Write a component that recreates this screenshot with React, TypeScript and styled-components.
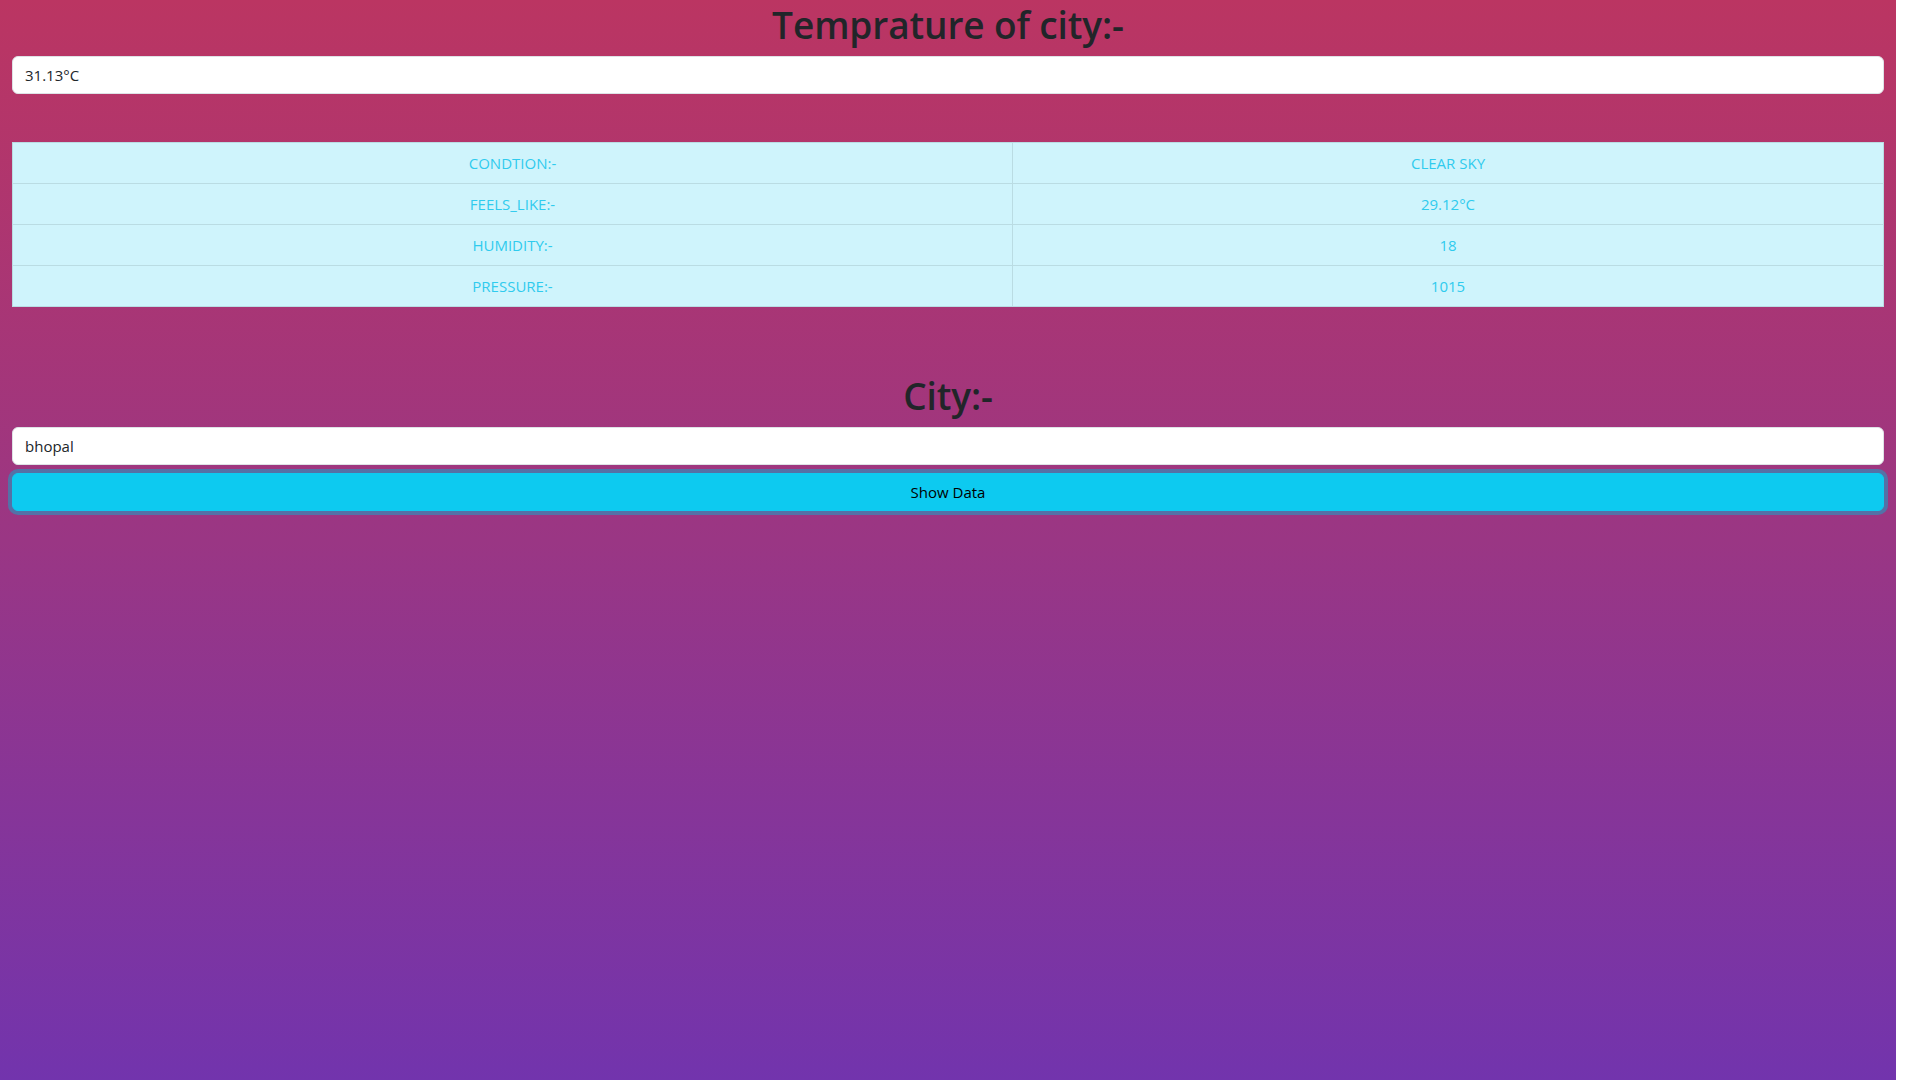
import React from "react";
import styled, { createGlobalStyle } from "styled-components";

const Global = createGlobalStyle`
  html, body { margin: 0; padding: 0; background: #ffffff; }
  body {
    font-family: "Open Sans", "Noto Sans", "Liberation Sans", sans-serif;
    font-size: 16px;
    line-height: 1.5;
    color: #212529;
  }
  * { box-sizing: border-box; }
`;

const Page = styled.div`
  width: calc(100% - 24px);
  min-height: 1080px;
  background: linear-gradient(to bottom, #bb3562 0%, #9a3684 50%, #7234ad 100%);
  padding: 0 12px;
`;

const Heading = styled.h1<{ $top?: number }>`
  margin: ${(p) => p.$top ?? 0}px 0 8px;
  padding-top: 1px;
  height: 48px;
  font-family: "Open Sans", "Noto Sans", sans-serif;
  font-size: 37px;
  font-weight: 600;
  line-height: 48px;
  text-align: center;
  color: #212529;
  letter-spacing: -0.1px;
`;

const Field = styled.input`
  display: block;
  width: 100%;
  height: 38px;
  padding: 6px 12px;
  font-family: "Open Sans", "Noto Sans", sans-serif;
  font-size: 15px;
  line-height: 24px;
  color: #212529;
  background: #ffffff;
  border: 1px solid #dee2e6;
  border-radius: 6px;
  outline: none;
`;

const Table = styled.table`
  width: 100%;
  margin-top: 48px;
  border-collapse: collapse;
  background: #cff4fc;
  border: 1px solid #badce3;
  font-family: "Open Sans", "Noto Sans", sans-serif;
  font-size: 15px;
`;

const Cell = styled.td<{ $wide?: boolean }>`
  width: ${(p) => (p.$wide ? "1000px" : "auto")};
  height: 41px;
  padding: 8px;
  text-align: center;
  color: #2fcbee;
  border: 1px solid #badce3;
  line-height: 24px;
`;

const ShowButton = styled.button`
  display: block;
  width: 100%;
  height: 38px;
  margin-top: 8px;
  padding: 6px 12px;
  font-family: "Open Sans", "Noto Sans", sans-serif;
  font-size: 15px;
  line-height: 24px;
  color: #000000;
  background: #0dcaf0;
  border: 1px solid #0dcaf0;
  border-radius: 6px;
  box-shadow: 0 0 0 4px rgba(11, 172, 204, 0.5);
  cursor: pointer;
`;

const rows: [string, string][] = [
  ["CONDTION:-", "CLEAR SKY"],
  ["FEELS_LIKE:-", "29.12°C"],
  ["HUMIDITY:-", "18"],
  ["PRESSURE:-", "1015"],
];

export default function App() {
  return (
    <>
      <Global />
      <Page>
        <Heading>Temprature of city:-</Heading>
        <Field readOnly value="31.13°C" />
        <Table>
          <tbody>
            {rows.map(([k, v]) => (
              <tr key={k}>
                <Cell $wide>{k}</Cell>
                <Cell>{v}</Cell>
              </tr>
            ))}
          </tbody>
        </Table>
        <Heading $top={64}>City:-</Heading>
        <Field defaultValue="bhopal" />
        <ShowButton>Show Data</ShowButton>
      </Page>
    </>
  );
}
